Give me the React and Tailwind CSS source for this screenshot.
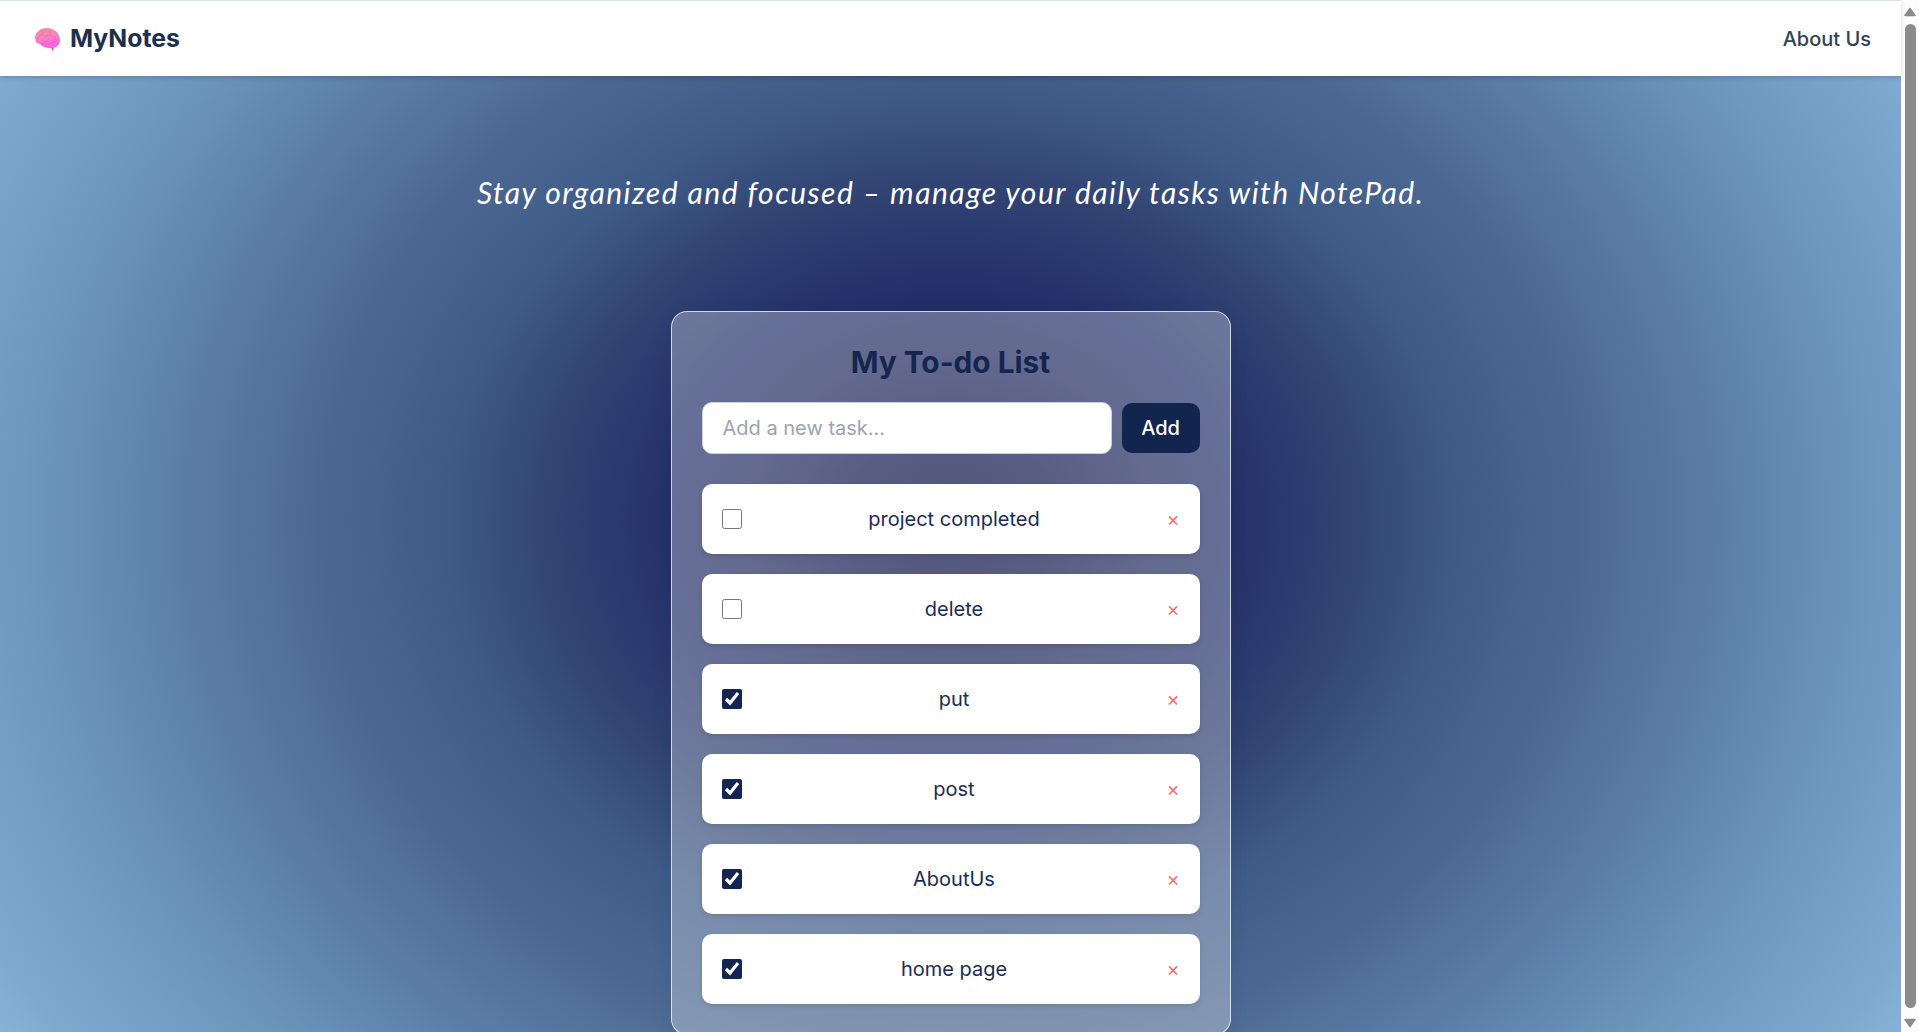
const tasks = [
  ['project completed', false],
  ['delete', false],
  ['put', true],
  ['post', true],
  ['AboutUs', true],
  ['home page', true],
];

const tagline = 'Stay organized and focused – manage your daily tasks with NotePad.';

function Brain() {
  return (
    <svg className="h-[26px] w-[27px] shrink-0" viewBox="0 0 27 26">
      <defs>
        <linearGradient id="brain" x1="0" y1="0" x2="0.3" y2="1">
          <stop offset="0" stopColor="#ee8a9c" />
          <stop offset="0.45" stopColor="#f588bb" />
          <stop offset="1" stopColor="#fd62e0" />
        </linearGradient>
      </defs>
      <path d="M16.500 20.500l2.500 4.500 1-4.500z" fill="#e52fc0" />
      <path d="M1 12.500C.5 7 6 2 13 2S25.500 7 26 13.500c.2 5-3 8-7 8.300-3 .4-6 .4-9-1C7.500 20 7 19 6 18 3 17.500 1.200 16 1 12.500z" fill="url(#brain)" />
      <path d="M3 14c1-3 3-6 6-5M7 5c2 0 3 2 2 4M11 11c3-3 6-2 8 0M17 4c-2 1-2 4 1 4M22 10c-2 1-1 4 1 5" fill="none" stroke="#d8679b" strokeWidth="0.7" opacity="0.8" />
      <path d="M7 17c3 1 5-1 6-3M14 18c3 0 4-2 7-2" fill="none" stroke="#dc45c0" strokeWidth="0.7" opacity="0.7" />
    </svg>
  );
}

export default function App() {
  return (
    <div className="flex h-[1032px] w-full overflow-hidden font-['Inter',sans-serif] text-[#14264f]">
      <div className="flex h-full w-[1901px] flex-col">
        <header className="z-10 flex h-[76px] shrink-0 items-center justify-between border-t border-[#dbe3ec] bg-white pl-[34px] pr-[30px] shadow-[0_2px_4px_rgba(0,0,0,0.15)]">
          <div className="flex items-center gap-[9px] text-[24.8px] font-bold text-[#1e2f4d]">
            <Brain />
            <span>MyNotes</span>
          </div>
          <a className="text-[20px] font-medium text-[#334155]">About Us</a>
        </header>
        <main className="flex min-h-0 flex-1 flex-col items-center bg-[radial-gradient(1000px_850px_at_50%_444px,#080f46_0%,#10174f_10%,#20295f_20%,#24316a_28%,#304272_39%,#3e5a87_50%,#4c6892_63%,#5b7ea9_77%,#6b94bb_90%,#739dc4_97%,#7ba6cd_105%,#86b3d7_113%)]">
          <p className="mt-[91px] h-[50px] whitespace-nowrap font-['Lato',sans-serif] text-[30px] italic leading-[50px] tracking-[1.47px] text-white">{tagline}</p>
          <section className="mt-[94px] h-[724px] w-[560px] shrink-0 rounded-[16px] border border-white/70 bg-white/30 p-[30px] shadow-[0_4px_20px_rgba(0,0,0,0.08)]">
            <h1 className="text-center text-[29.8px] font-bold leading-[40px]">My To-do List</h1>
            <div className="mt-[20px] flex items-center gap-[10px]">
              <div className="flex h-[52px] w-[410px] items-center rounded-[10px] border border-[#cbd0dc] bg-white px-[20px] text-[20px] text-[#9ca3af]">Add a new task...</div>
              <button className="h-[50px] w-[78px] rounded-[10px] bg-[#12254f] text-[20px] font-medium text-white">Add</button>
            </div>
            <ul className="mt-[30px] flex flex-col gap-[20px]">
              {tasks.map(([name, done]) => (
                <li key={name} className="flex h-[70px] items-center rounded-[10px] bg-white px-[20px] shadow-[0_2px_5px_rgba(0,0,0,0.12)]">
                  <input type="checkbox" defaultChecked={done} className="size-[20px] accent-[#14264f]" />
                  <span className="flex-1 text-center text-[20px] text-[#1a2c58]">{name}</span>
                  <span className="w-[13px] text-center text-[20px] text-[#f87171]">×</span>
                </li>
              ))}
            </ul>
          </section>
        </main>
      </div>
      <div className="flex h-full w-[18px] flex-col items-center bg-[#fcfcfc] pt-[7px]">
        <svg className="shrink-0" width="12" height="10" viewBox="0 0 12 10"><path d="M6 1.500L11 8.500H1z" fill="#8b8b8b" stroke="#8b8b8b" strokeWidth="1.500" strokeLinejoin="round" /></svg>
        <div className="mt-[7px] h-[984px] w-[11px] shrink-0 rounded-full bg-[#8b8b8b]" />
        <svg className="mt-[10px] shrink-0" width="12" height="10" viewBox="0 0 12 10"><path d="M6 8.500L1 1.500h10z" fill="#8b8b8b" stroke="#8b8b8b" strokeWidth="1.500" strokeLinejoin="round" /></svg>
      </div>
    </div>
  );
}
